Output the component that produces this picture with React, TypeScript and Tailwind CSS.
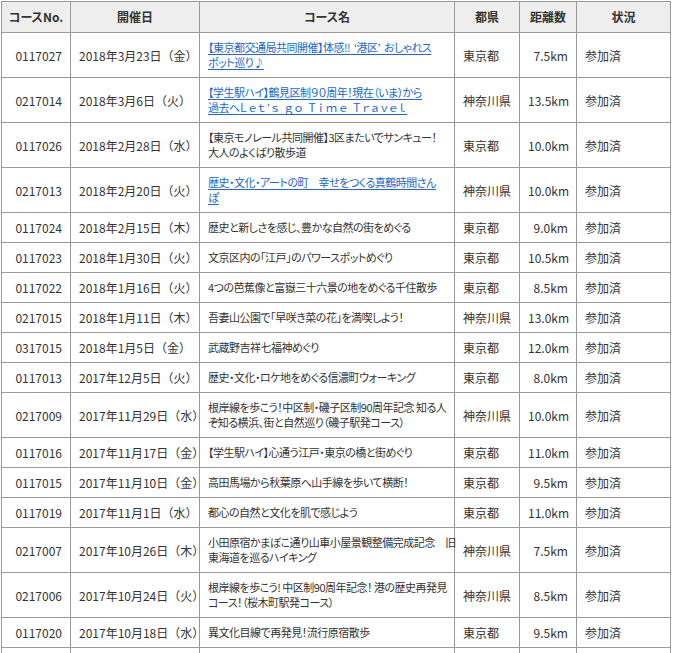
import React from 'react';

type Row = {
  no: string;
  date: string;
  name: string[];
  link?: boolean;
  pref: string;
  dist: string;
};

const rows: Row[] = [
  { no: '0117027', date: '2018年3月23日（金）', name: ['【東京都交通局共同開催】体感!!  ‘港区’  おしゃれス', 'ポット巡り♪'], link: true, pref: '東京都', dist: '7.5km' },
  { no: '0217014', date: '2018年3月6日（火）', name: ['【学生駅ハイ】鶴見区制９０周年！現在（いま）から', '過去へ'], link: true, pref: '神奈川県', dist: '13.5km' },
  { no: '0117026', date: '2018年2月28日（水）', name: ['【東京モノレール共同開催】3区またいでサンキュー！', '大人のよくばり散歩道'], pref: '東京都', dist: '10.0km' },
  { no: '0217013', date: '2018年2月20日（火）', name: ['歴史・文化・アートの町　幸せをつくる真鶴時間さん', 'ぽ'], link: true, pref: '神奈川県', dist: '10.0km' },
  { no: '0117024', date: '2018年2月15日（木）', name: ['歴史と新しさを感じ、豊かな自然の街をめぐる'], pref: '東京都', dist: '9.0km' },
  { no: '0117023', date: '2018年1月30日（火）', name: ['文京区内の「江戸」のパワースポットめぐり'], pref: '東京都', dist: '10.5km' },
  { no: '0117022', date: '2018年1月16日（火）', name: ['4つの芭蕉像と富嶽三十六景の地をめぐる千住散歩'], pref: '東京都', dist: '8.5km' },
  { no: '0217015', date: '2018年1月11日（木）', name: ['吾妻山公園で「早咲き菜の花」を満喫しよう！'], pref: '神奈川県', dist: '13.0km' },
  { no: '0317015', date: '2018年1月5日（金）', name: ['武蔵野吉祥七福神めぐり'], pref: '東京都', dist: '12.0km' },
  { no: '0117013', date: '2017年12月5日（火）', name: ['歴史・文化・ロケ地をめぐる信濃町ウォーキング'], pref: '東京都', dist: '8.0km' },
  { no: '0217009', date: '2017年11月29日（水）', name: ['根岸線を歩こう！中区制・磯子区制90周年記念 知る人', 'ぞ知る横浜、街と自然巡り（磯子駅発コース）'], pref: '神奈川県', dist: '10.0km' },
  { no: '0117016', date: '2017年11月17日（金）', name: ['【学生駅ハイ】心通う江戸・東京の橋と街めぐり'], pref: '東京都', dist: '11.0km' },
  { no: '0117015', date: '2017年11月10日（金）', name: ['高田馬場から秋葉原へ山手線を歩いて横断！'], pref: '東京都', dist: '9.5km' },
  { no: '0117019', date: '2017年11月1日（水）', name: ['都心の自然と文化を肌で感じよう'], pref: '東京都', dist: '11.0km' },
  { no: '0217007', date: '2017年10月26日（木）', name: ['小田原宿かまぼこ通り山車小屋景観整備完成記念　旧', '東海道を巡るハイキング'], pref: '神奈川県', dist: '7.5km' },
  { no: '0217006', date: '2017年10月24日（火）', name: ['根岸線を歩こう! 中区制90周年記念！ 港の歴史再発見', 'コース！（桜木町駅発コース）'], pref: '神奈川県', dist: '8.5km' },
  { no: '0117020', date: '2017年10月18日（水）', name: ['異文化目線で再発見！流行原宿散歩'], pref: '東京都', dist: '9.5km' },
];

const th = "border border-[#999] bg-[#eeeeee] py-[7px] px-1 text-center font-bold leading-[16px] whitespace-nowrap [font-feature-settings:'palt']";
const td = 'border border-[#999] py-[7px] px-2 align-middle leading-[15px]';

const App: React.FC = () => {
  return (
    <div
      className="min-h-screen bg-white p-px text-[12px] text-[#333]"
      style={{ fontFamily: '"Noto Sans CJK JP", "Noto Sans", sans-serif' }}
    >
      <table className="w-[669px] table-fixed border-collapse">
        <colgroup>
          <col className="w-[69px]" />
          <col className="w-[129px]" />
          <col className="w-[255px]" />
          <col className="w-[65px]" />
          <col className="w-[57px]" />
          <col className="w-[94px]" />
        </colgroup>
        <thead>
          <tr>
            <th className={th}>コースNo.</th>
            <th className={th}>開催日</th>
            <th className={th}>コース名</th>
            <th className={th}>都県</th>
            <th className={th}>距離数</th>
            <th className={th}>状況</th>
          </tr>
        </thead>
        <tbody>
          {rows.map((r) => (
            <tr key={r.no}>
              <td className={`${td} text-right`}>{r.no}</td>
              <td className={`${td} whitespace-nowrap`}>{r.date}</td>
              <td className={`${td} whitespace-pre text-[11px] tracking-[-0.5px] [font-feature-settings:'palt']`}>
                {r.name.map((line, i) => (
                  <React.Fragment key={i}>
                    {i > 0 && <br />}
                    {r.link ? (
                      <a href="#" className="text-[#2266cc] underline underline-offset-2">
                        {line}
                        {r.no === '0217014' && i === 1 && (
                          <span className="tracking-[1.5px]">Ｌｅｔ’ｓ ｇｏ Ｔｉｍｅ Ｔｒａｖｅｌ</span>
                        )}
                      </a>
                    ) : (
                      line
                    )}
                  </React.Fragment>
                ))}
              </td>
              <td className={td}>{r.pref}</td>
              <td className={`${td} text-right`}>{r.dist}</td>
              <td className={td}>参加済</td>
            </tr>
          ))}
          <tr>
            <td className={td}>&nbsp;</td>
            <td className={td}>&nbsp;</td>
            <td className={td}>&nbsp;</td>
            <td className={td}>&nbsp;</td>
            <td className={td}>&nbsp;</td>
            <td className={td}>&nbsp;</td>
          </tr>
        </tbody>
      </table>
    </div>
  );
};

export default App;
